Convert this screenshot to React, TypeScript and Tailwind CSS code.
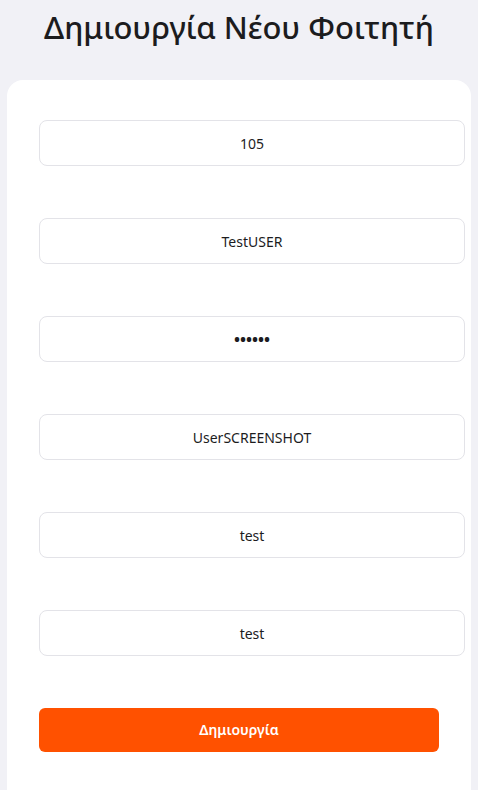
import React from "react";

const fields = [
  { value: "105", type: "text" },
  { value: "TestUSER", type: "text" },
  { value: "123456", type: "password" },
  { value: "UserSCREENSHOT", type: "text" },
  { value: "test", type: "text" },
  { value: "test", type: "text" },
];

export default function App() {
  return (
    <div
      className="min-h-screen bg-[#f1f1f6] overflow-hidden"
      style={{ fontFamily: "'Noto Sans', 'Open Sans', sans-serif" }}
    >
      <h1 className="pt-[7px] text-center text-[31px] leading-[40px] font-medium text-[#1c1c1e]">
        Δημιουργία Νέου Φοιτητή
      </h1>
      <div className="mt-[33px] ml-[7px] w-[464px] min-h-[720px] rounded-t-2xl bg-white pt-[40px] pl-[32px]">
        <form className="flex flex-col gap-[52px]">
          {fields.map((f, i) => (
            <input
              key={i}
              type={f.type}
              readOnly
              value={f.value}
              className={
                f.type === "password"
                  ? "h-[46px] w-[426px] rounded-lg border border-[#e3e3e8] bg-white text-center text-base font-bold text-[#1c1c1e] outline-none"
                  : "h-[46px] w-[426px] rounded-lg border border-[#e3e3e8] bg-white text-center text-sm text-[#1c1c1e] outline-none"
              }
            />
          ))}
          <button
            type="button"
            className="h-[44px] w-[400px] rounded-md bg-[#ff5100] text-sm font-semibold text-white"
          >
            Δημιουργία
          </button>
        </form>
      </div>
    </div>
  );
}
